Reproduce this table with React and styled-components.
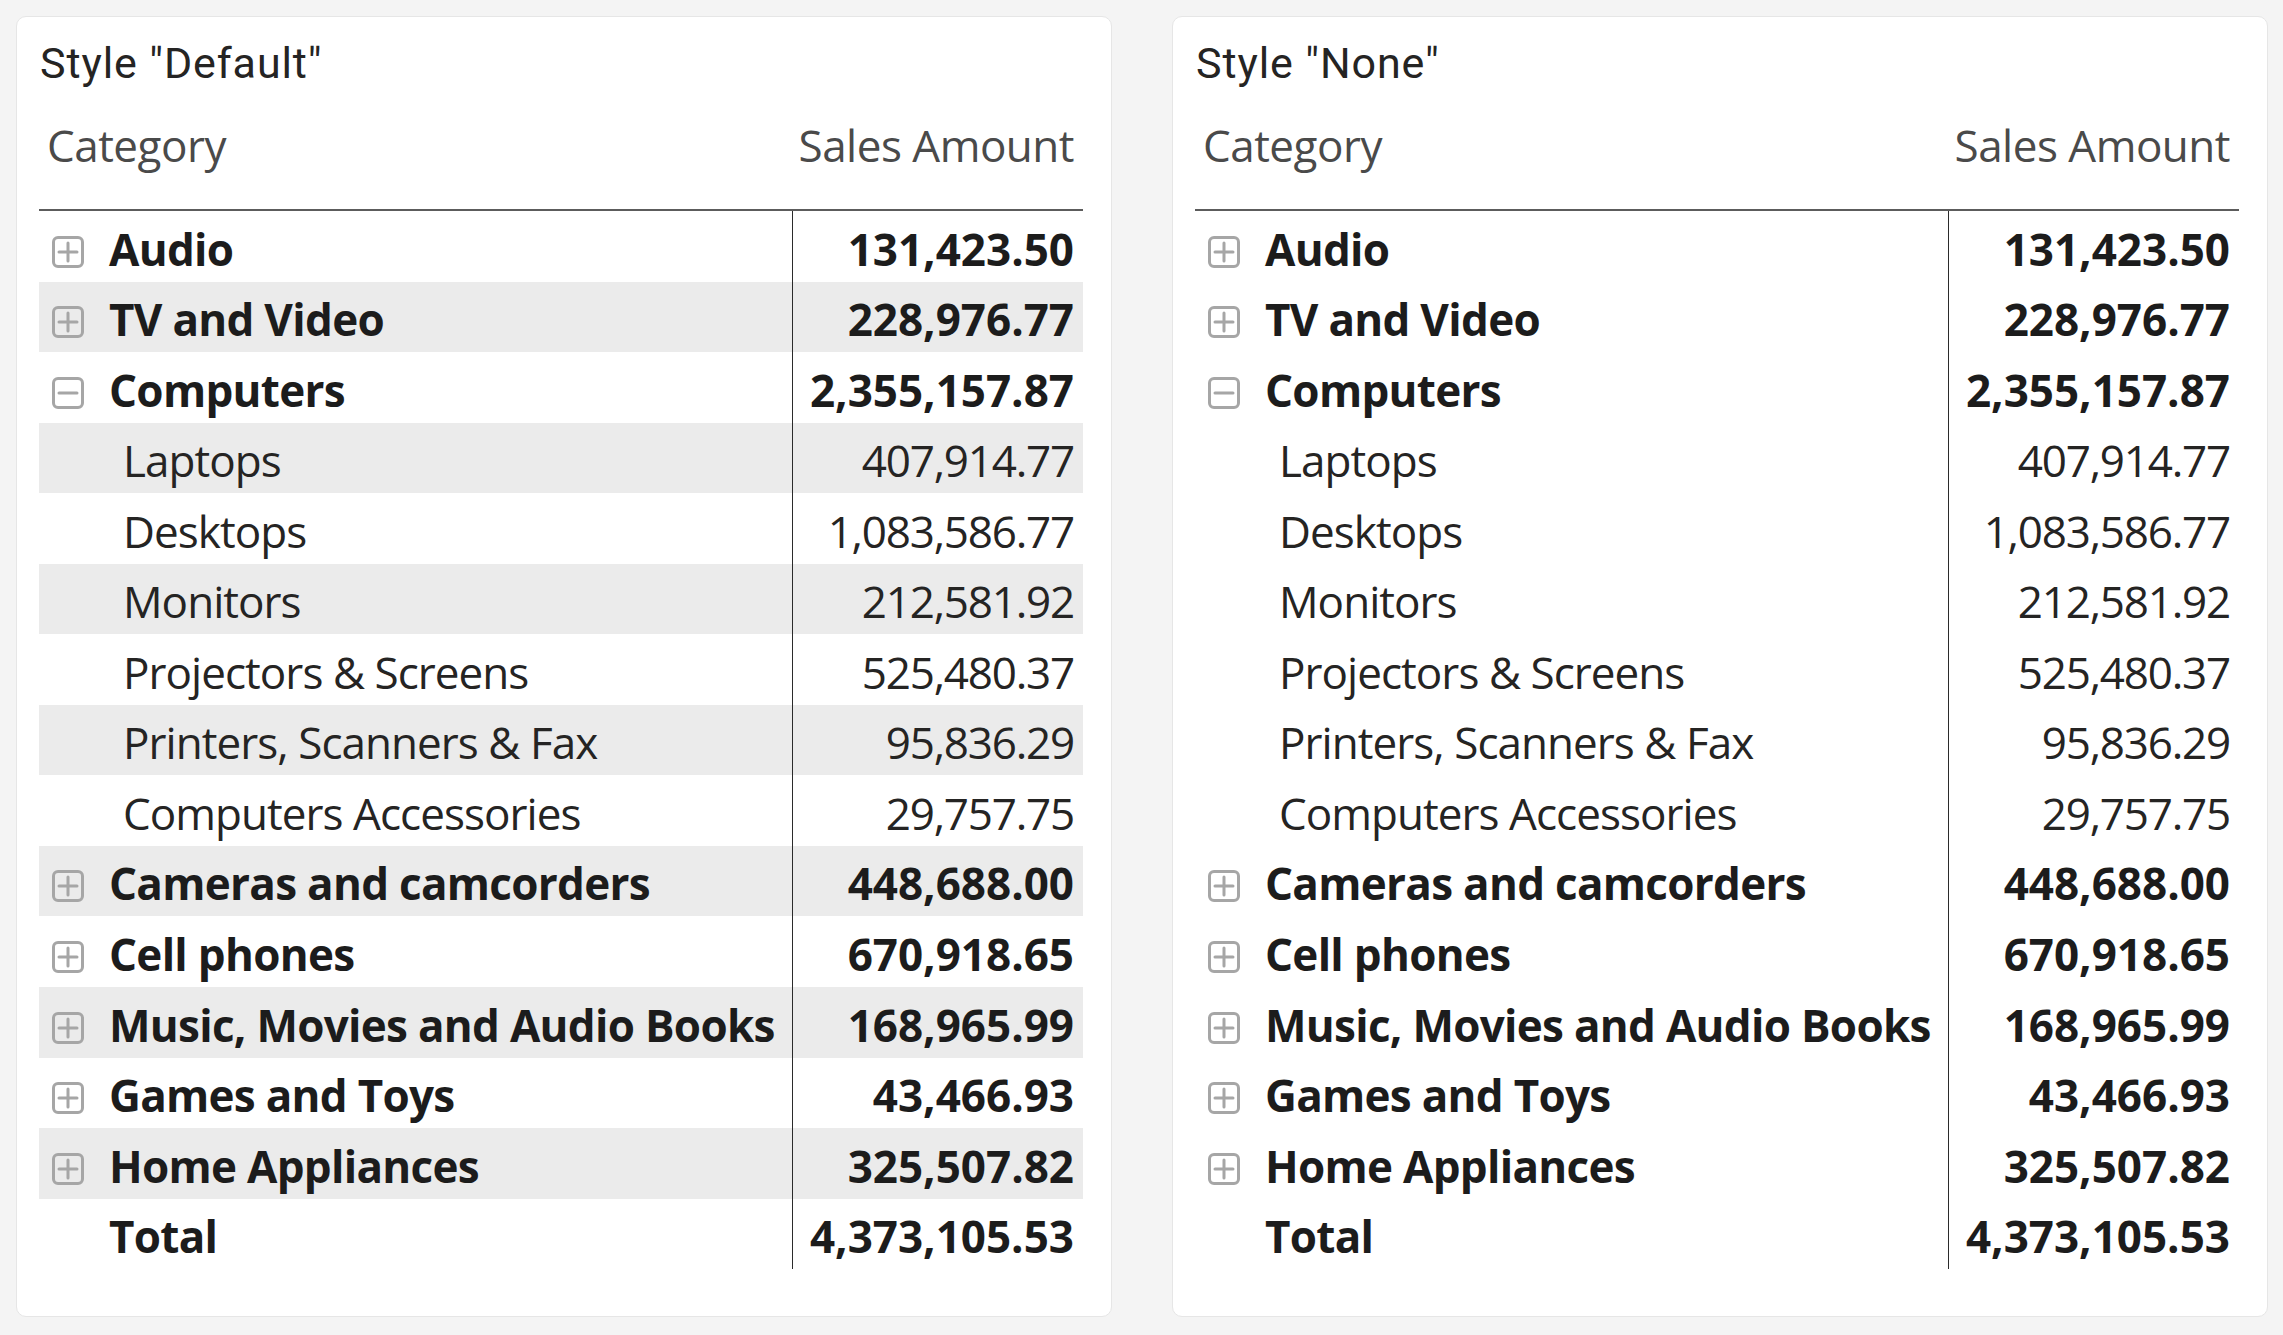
import React from 'react';
import styled, { createGlobalStyle } from 'styled-components';

const GlobalStyle = createGlobalStyle`
  html, body { margin: 0; padding: 0; background: #f4f4f4; }
  body { font-family: "Open Sans", "Noto Sans", sans-serif; color: #252423; }
`;

const Page = styled.div`
  display: flex;
  gap: 60px;
  padding: 16px 15px 18px 16px;
  width: 2283px;
  height: 1335px;
  box-sizing: border-box;
`;

const Card = styled.section`
  width: 1096px;
  height: 1301px;
  box-sizing: border-box;
  background: #ffffff;
  border: 1px solid #e6e6e6;
  border-radius: 10px;
  padding: 21px 28px 0 22px;
`;

const Title = styled.div`
  font-family: Roboto, "Liberation Sans", sans-serif;
  font-size: 43px;
  letter-spacing: 0.9px;
  line-height: 50px;
  height: 50px;
  color: #252423;
  padding-left: 1px;
`;

const Header = styled.div`
  display: grid;
  grid-template-columns: 753px 291px;
  padding: 27px 0 34px;
  border-bottom: 2px solid #5c5c5c;
  font-size: 44px;
  line-height: 60px;
  color: #4a4a4a;
  letter-spacing: -0.5px;
`;

const HeadCell = styled.div`
  padding-left: ${p => (p.$right ? 0 : 8)}px;
  padding-right: ${p => (p.$right ? 9 : 0)}px;
  text-align: ${p => (p.$right ? 'right' : 'left')};
  white-space: nowrap;
`;

const Row = styled.div`
  display: grid;
  grid-template-columns: 753px 291px;
  height: 70.55px;
  background: ${p => (p.$stripe ? '#ebebeb' : 'transparent')};
  font-size: 44px;
  font-weight: ${p => (p.$bold ? 700 : 400)};
  color: ${p => (p.$bold ? '#1c1c1c' : '#252423')};
`;

const NameCell = styled.div`
  display: flex;
  align-items: center;
  box-sizing: border-box;
  height: 70.55px;
  padding-top: 4.5px;
  line-height: 66.05px;
  padding-left: ${p => p.$indent}px;
  white-space: nowrap;
  letter-spacing: ${p => (p.$bold ? '-0.7px' : '-0.95px')};
`;

const ValueCell = styled.div`
  box-sizing: border-box;
  height: 70.55px;
  padding-top: 4.5px;
  padding-right: 9px;
  line-height: 66.05px;
  text-align: right;
  border-left: 1px solid #2b2b2b;
  white-space: nowrap;
  letter-spacing: ${p => (p.$bold ? '0px' : '-1.2px')};
`;

const IconBox = styled.svg`
  flex: none;
  width: 32px;
  height: 32px;
  margin-top: 6px;
  margin-right: 25px;
`;

function ToggleIcon({ open }) {
  return (
    <IconBox viewBox="0 0 32 32">
      <rect x="1.5" y="1.5" width="29" height="29" rx="4.5" fill="none" stroke="#a6a6a6" strokeWidth="3" />
      <line x1="7" y1="16" x2="25" y2="16" stroke="#a6a6a6" strokeWidth="3" strokeLinecap="round" />
      {!open && <line x1="16" y1="7" x2="16" y2="25" stroke="#a6a6a6" strokeWidth="3" strokeLinecap="round" />}
    </IconBox>
  );
}

const rows = [
  { name: 'Audio', value: '131,423.50', level: 0 },
  { name: 'TV and Video', value: '228,976.77', level: 0 },
  { name: 'Computers', value: '2,355,157.87', level: 0, open: true },
  { name: 'Laptops', value: '407,914.77', level: 1 },
  { name: 'Desktops', value: '1,083,586.77', level: 1 },
  { name: 'Monitors', value: '212,581.92', level: 1 },
  { name: 'Projectors & Screens', value: '525,480.37', level: 1 },
  { name: 'Printers, Scanners & Fax', value: '95,836.29', level: 1 },
  { name: 'Computers Accessories', value: '29,757.75', level: 1 },
  { name: 'Cameras and camcorders', value: '448,688.00', level: 0 },
  { name: 'Cell phones', value: '670,918.65', level: 0 },
  { name: 'Music, Movies and Audio Books', value: '168,965.99', level: 0 },
  { name: 'Games and Toys', value: '43,466.93', level: 0 },
  { name: 'Home Appliances', value: '325,507.82', level: 0 },
  { name: 'Total', value: '4,373,105.53', level: 'total' },
];

function Matrix({ title, striped }) {
  return (
    <Card>
      <Title>{title}</Title>
      <Header>
        <HeadCell>Category</HeadCell>
        <HeadCell $right>Sales Amount</HeadCell>
      </Header>
      {rows.map((r, i) => {
        const bold = r.level !== 1;
        const indent = r.level === 0 ? 13 : r.level === 1 ? 84 : 70;
        return (
          <Row key={r.name} $stripe={striped && i % 2 === 1} $bold={bold}>
            <NameCell $indent={indent} $bold={bold}>
              {r.level === 0 && <ToggleIcon open={r.open} />}
              {r.name}
            </NameCell>
            <ValueCell $bold={bold}>{r.value}</ValueCell>
          </Row>
        );
      })}
    </Card>
  );
}

export default function App() {
  return (
    <>
      <GlobalStyle />
      <Page>
        <Matrix title={'Style "Default"'} striped />
        <Matrix title={'Style "None"'} striped={false} />
      </Page>
    </>
  );
}
